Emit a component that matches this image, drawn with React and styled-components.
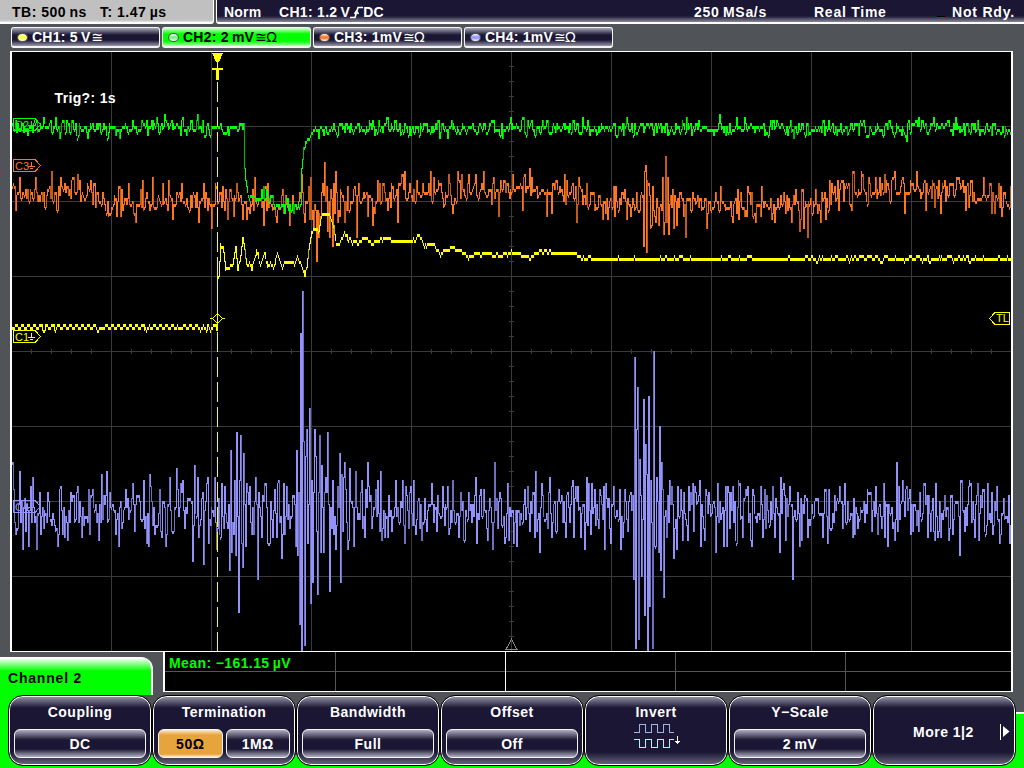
import React from 'react'
import styled, { createGlobalStyle } from 'styled-components';

const GREEN = '#00ff00';
const YELLOW = '#ffff00';
const ORANGE = '#ff7620';
const VIOLET = '#9292fa';
const NAVY = '#1a1633';

const LEFT = 12;
const RIGHT = 1011;

// small seeded generator, keeps the noise the same on every render
const rng = (seed) => () => {
    seed = (seed * 1664525 + 1013904223) % 4294967296;
    return seed / 4294967296;
};

const lerp = (knots, x) => {
    for (let i = 1; i < knots.length; i++) {
        if (x <= knots[i][0]) {
            const [x0, y0] = knots[i - 1];
            const [x1, y1] = knots[i];
            return y0 + ((y1 - y0) * (x - x0)) / (x1 - x0);
        }
    }
    return knots[knots.length - 1][1];
};

const pairs = (text) => text.trim().split(/\s+/).map((p) => p.split(':').map(Number));

// one level per pixel column, snapped to the 3px steps of the converter
const buildTrace = ({ knots, amp, hold, seed, spikes, ripple }) => {
    const rand = rng(seed);
    const fixed = new Map(spikes);
    const levels = [];
    let offset = 0;
    for (let x = LEFT; x < RIGHT; x++) {
        if (rand() > hold) offset = (rand() + rand() + rand() - 1.5) * 1.25 * amp(x);
        const wave = ripple ? ripple(x) : 0;
        const y = fixed.has(x + 1) ? fixed.get(x + 1) : lerp(knots, x) + offset + wave;
        levels.push(Math.round((y - 52) / 3) * 3 + 51);
    }
    let bright = '';
    let dim = '';
    levels.forEach((y, i) => {
        const prev = i ? levels[i - 1] : y;
        const jump = Math.abs(y - prev);
        const top = jump > 3 ? Math.min(y, prev) : y;
        const bottom = jump > 3 ? Math.max(y, prev) + 1 : y + 3;
        const column = `M${LEFT + i + 0.5} ${top}V${Math.min(651, bottom)}`;
        if (jump > 8 && rand() > 0.65) dim += column;
        else bright += column;
    });
    return { bright, dim };
};

const ch1 = buildTrace({
    seed: 5, hold: 0.5, spikes: [],
    amp: (x) => (x < 217 ? 0.7 : x < 335 ? 0.4 : x < 590 ? 1.6 : x < 790 ? 1 : 0.8),
    ripple: (x) => {
        if (x < 217) return x % 6 < 3 ? 1.6 : -1.6;
        if (x > 800) return x % 8 < 3 ? 2 : -0.6;
        return 0;
    },
    knots: pairs(`12:327.5 216:327.5 217:277 218:277 220:245 222:247 225:270 228:267 232:266 235:247 237:270
        240:256 242:238 244:250 246:266 249:262 251:270 256:250 260:264 264:253 267:267 270:262 273:268
        277:253 282:267 285:261 292:261 294:264 297:257 300:263 302:268 304:276 306:268 308:250 311:232
        315:228 318:231 321:217 323:213 330:216 333:227 335:242 340:243 344:231 347:239 358:243 364:236
        370:243 380:240 387:237 394:242 400:240 415:240 417:234 420:238 424:246 432:243 440:254 448:249
        460:249 468:257 476:253 500:255 511:252 518:254 530:257 540:252 552:252 560:254 568:252 576:254
        584:258 1011:258.2`),
});

const ch2 = buildTrace({
    seed: 21, hold: 0.2,
    amp: (x) => (x > 243 && x < 254 ? 0 : x > 299 && x < 313 ? 1 : 6.6),
    knots: pairs(`12:129 60:128 100:129 160:126 243:129 244:170 245:182 247:192 249:198 252:196 258:198 264:196
        270:203 280:205 290:208 299:207 300:205 301:168 302:160 303:150 305:145 307:140 309:138 311:134
        314:131 330:129 420:128 1011:128`),
    spikes: pairs(`60:138 78:138 116:137 120:138 157:119 158:124 181:136 264:188 294:214 654:135 668:135
        687:118 720:115 726:135 737:119 848:135 895:135 907:141 956:118 992:135`),
});

const ch3 = buildTrace({
    seed: 77, hold: 0.25, amp: (x) => (x > 300 && x < 335 ? 20 : x > 643 && x < 670 ? 26 : 11.5),
    knots: pairs('12:191 90:193 105:200 210:201 300:203 380:203 400:190 560:190 600:203 800:206 830:198 860:190 900:189 950:192 1011:201'),
    spikes: pairs(`16:210 20:178 36:178 38:203 43:203 52:172 61:178 78:175 91:181 107:214 109:216 117:217 123:210
        129:184 136:223 143:181 153:178 163:184 182:184 189:207 199:222 204:184 212:229 216:184 222:207
        228:219 237:184 247:220 255:178 264:226 268:184 277:223 283:190 290:225 309:187 312:220 314:230
        317:262 319:238 325:163 328:232 330:238 333:246 336:172 338:224 341:190 345:222 348:187 355:187
        357:238 365:200 373:226 378:181 388:211 392:184 398:222 403:175 405:172 413:201 434:178 445:204
        449:175 453:213 462:175 469:175 476:175 484:172 499:216 513:175 523:210 530:169 547:216 552:213
        556:180 577:222 581:187 603:219 608:219 614:187 631:216 637:193 644:247 646:166 647:253 649:184
        651:229 653:187 655:218 659:225 663:178 664:235 666:157 667:224 668:178 669:235 674:228 677:225
        686:238 693:193 707:229 716:193 721:187 733:223 738:190 756:223 762:187 775:223 784:193 792:223
        796:190 800:232 804:228 808:238 816:190 821:223 826:219 835:187 839:211 845:184 849:184 852:211
        862:172 868:204 876:178 880:178 890:202 895:172 905:214 917:172 926:211 933:181 939:181 941:214
        966:211 971:181 984:178 995:214 999:184 1002:217 1010:207`),
});

const ch4 = buildTrace({
    seed: 1234, hold: 0.12,
    amp: (x) => ((x > 228 && x < 250) || (x > 300 && x < 350) || (x > 633 && x < 664) ? 36 : 22),
    knots: pairs('12:511 1011:512'),
    spikes: pairs(`12:481 13:463 16:535 20:472 23:550 29:547 33:478 37:550 41:535 44:528 48:493 52:526 56:531
        59:535 60:490 63:536 68:541 71:493 76:520 82:538 88:523 89:490 93:490 99:541 107:472 116:535
        119:547 126:490 144:481 147:544 149:547 150:475 155:535 166:547 170:478 177:468 183:480 185:529
        193:562 195:466 198:478 199:538 204:565 207:484 208:478 209:544 217:550 221:538 225:487 230:571
        231:451 232:553 236:556 237:433 239:612 241:436 243:567 244:454 246:547 247:484 254:535 256:478
        258:580 262:537 265:484 273:537 278:484 282:558 284:484 287:487 296:546 297:451 298:556 300:625
        301:334 302:651 303:292 304:442 305:646 307:430 308:544 310:409 311:604 312:481 313:583 315:430
        316:457 318:595 320:436 321:553 322:466 324:553 326:478 328:433 330:592 333:481 334:534 336:550
        340:454 341:583 345:463 348:549 350:469 354:547 356:472 360:519 362:481 365:537 368:463 372:528
        376:490 381:472 382:541 385:537 388:537 392:532 396:481 403:481 405:544 409:528 414:481 416:535
        422:540 427:532 432:484 443:487 459:538 477:544 484:490 488:540 493:550 495:463 505:543 508:484
        509:541 517:547 525:490 535:538 536:472 540:553 550:478 552:538 559:490 572:487 585:550 587:478
        591:535 595:490 599:529 605:550 606:484 611:544 614:487 620:490 621:550 625:490 628:532 631:493
        634:580 635:358 636:649 637:430 638:388 639:640 640:460 642:577 644:400 645:616 646:445 648:651
        649:397 650:607 651:481 653:649 654:352 655:547 656:547 657:478 659:553 660:427 661:571 662:463
        663:490 664:598 667:538 670:481 672:487 674:559 677:550 681:490 683:541 684:493 689:487 694:532
        695:487 700:481 701:547 705:541 706:490 709:493 716:553 724:547 728:487 731:493 736:541 740:484
        743:538 748:487 751:541 753:490 761:487 763:538 773:487 775:538 780:553 781:478 784:484 786:541
        793:580 800:547 802:541 823:538 840:487 845:484 855:535 868:490 876:487 884:484 885:538 888:547
        897:463 903:481 906:490 911:535 928:538 936:484 941:538 949:541 960:556 961:481 970:481 975:538
        978:484 988:484 993:535 1000:544 1010:544`),
});

const channels = [
    { name: 'CH1:', value: '5\u2009V', ohm: false, color: '#ffff40' },
    { name: 'CH2:', value: '2\u2009mV', ohm: true, color: '#7df08a', active: true },
    { name: 'CH3:', value: '1mV', ohm: true, color: '#ff7a28' },
    { name: 'CH4:', value: '1mV', ohm: true, color: '#9a9aff' },
];

const range = (from, to, step) => {
    const out = [];
    for (let v = from; v <= to; v += step) out.push(v);
    return out;
};

const Trace = ({ data, color, dim }) => (
    <g fill="none">
        <path d={data.bright} stroke={color} />
        <path d={data.dim} stroke={dim} />
    </g>
);

const Tag = ({ y, color, label }) => (
    <g stroke={color} fill="none">
        <path d={`M13.5 ${y - 6}H35L40.5 ${y}L35 ${y + 6}H13.5Z`} />
        <path d={`M31.5 ${y - 4}v5M28 ${y + 1}h7M30 ${y + 3}h3`} />
        <TagText x="15" y={y + 4} fill={color} stroke="none">{label}</TagText>
    </g>
);

const Graph = () => (
    <Plot viewBox="12 52 999 599" shapeRendering="crispEdges">
        <g stroke="#3a3a3a" fill="none">
            {range(111, 911, 100).map((x) => <path key={x} d={`M${x + 0.5} 52V651`} />)}
            {range(126, 576, 75).map((y) => <path key={y} d={`M12 ${y + 0.5}H1011`} />)}
            {range(31, 1000, 20).map((x) => <path key={x} d={`M${x + 0.5} 349V354`} />)}
            {range(66, 645, 15).map((y) => <path key={y} d={`M509 ${y + 0.5}H514`} />)}
        </g>
        <path d="M511.5 639L517 649.5H506Z" fill="none" stroke="#8a8a8a" />
        <Trace data={ch4} color={VIOLET} dim="#6f6fc0" />
        <Trace data={ch3} color={ORANGE} dim="#c25a1c" />
        <Trace data={ch2} color={GREEN} dim="#00b400" />
        <path d="M217.5 82V651" stroke={YELLOW} strokeDasharray="20 5" />
        <path d="M217.5 270V330" stroke={YELLOW} />
        <Trace data={ch1} color={YELLOW} dim="#b4b400" />
        <Tag y={124.5} color={GREEN} label="C2" />
        <Tag y={165.5} color={ORANGE} label="C3" />
        <Tag y={336.5} color={YELLOW} label="C1" />
        <Tag y={506.5} color={VIOLET} label="C4" />
        <path d="M212 53H223L219 62H216Z" fill={YELLOW} />
        <path d="M212 69H223" stroke={YELLOW} strokeWidth="2" />
        <path d="M217.5 62V68" stroke={YELLOW} />
        <path d="M217.5 68V80" stroke={YELLOW} strokeWidth="3" />
        <path d="M217.5 313.5L222.5 318.5L217.5 323.5L212.5 318.5Z" fill="none" stroke={YELLOW} />
        <path d="M210 318.5H213M222 318.5H225" stroke={YELLOW} />
        <path d="M1009.5 312.5H995L989.5 318.5L995 324.5H1009.5Z" fill="none" stroke={YELLOW} />
        <TagText x="996" y="322" fill={YELLOW}>TL</TagText>
        <TrigText x="54.5" y="103">Trig?: 1s</TrigText>
    </Plot>
);

const App = () => {
    return (
        <Screen>
            <GlobalStyle />
            <TopBar>
                <TimeBase>
                    <Readout $w="88px">TB: 500{'\u2009'}ns</Readout>
                    <Readout>T: 1.47{'\u2009'}µs</Readout>
                </TimeBase>
                <Trigger>
                    <Readout $w="55px" $ls="0.2px">Norm</Readout>
                    <Readout $w="415px" $ls="0.3px">
                        CH1: 1.2{'\u2009'}V
                        <svg width="13" height="13" viewBox="0 0 13 13" fill="none" stroke="#fff" strokeWidth="1.6">
                            <path d="M0 11.5H5L8 1.5H13M4.5 8L6.5 5L8.5 8" />
                        </svg>
                        DC
                    </Readout>
                    <Readout $w="120px" $ls="0.7px">250{'\u2009'}MSa/s</Readout>
                    <Readout $w="123px" $ls="0.75px">Real Time</Readout>
                    <Led />
                    <Readout $ls="0.8px">Not Rdy.</Readout>
                </Trigger>
            </TopBar>
            <Tabs>
                {channels.map((c) => (
                    <Tab key={c.name} $active={c.active}>
                        <Dot $color={c.color} />
                        <span>{c.name} {c.value}</span>
                        <Symbol>≅{c.ohm && 'Ω'}</Symbol>
                    </Tab>
                ))}
            </Tabs>
            <Scope>
                <Graph />
            </Scope>
            <Middle>
                <ChannelName>Channel 2</ChannelName>
                <Measure>
                    <Cell $span>Mean: −161.15{'\u2009'}µV</Cell>
                    <Cell $line="#fff" />
                    <Cell $line="#555" />
                    <Cell $line="#555" />
                    <Cell />
                </Measure>
            </Middle>
            <SoftKeys>
                <Key>
                    <Title>Coupling</Title>
                    <Row><Field>DC</Field></Row>
                </Key>
                <Key>
                    <Title>Termination</Title>
                    <Row>
                        <Field $on>50Ω</Field>
                        <Field>1MΩ</Field>
                    </Row>
                </Key>
                <Key>
                    <Title>Bandwidth</Title>
                    <Row><Field>Full</Field></Row>
                </Key>
                <Key>
                    <Title>Offset</Title>
                    <Row><Field>Off</Field></Row>
                </Key>
                <Key>
                    <Title>Invert</Title>
                    <InvertIcon width="48" height="26" viewBox="0 0 48 26" fill="none" shapeRendering="crispEdges">
                        <path d="M0 9.5H5.5V1.5H11.5V9.5H17.5V1.5H23.5V9.5H29.5V1.5H35.5V9.5H40" stroke="#9fb4e6" />
                        <path d="M0 16.5H5.5V24.5H11.5V16.5H17.5V24.5H23.5V16.5H29.5V24.5H35.5V16.5H40" stroke="#b4f0fa" />
                        <path d="M43.5 13V21M41 18.5H46M42 19.5H45" stroke="#fff" />
                    </InvertIcon>
                </Key>
                <Key>
                    <Title>Y−Scale</Title>
                    <Row><Field>2{'\u2009'}mV</Field></Row>
                </Key>
                <Key $more>
                    <span>More 1|2</span>
                    <svg width="10" height="16" viewBox="0 0 10 16">
                        <path d="M0.5 0V16" stroke="#fff" />
                        <path d="M3 2L9.5 7.5L3 13Z" fill="#fff" />
                    </svg>
                </Key>
            </SoftKeys>
        </Screen>
    )
}

const GlobalStyle = createGlobalStyle`
  body{
    margin: 0;
    background: #505458;
  }
`;

const Screen = styled.main`
  width: 1024px;
  height: 768px;
  display: flex;
  flex-direction: column;
  overflow: hidden;
  background: #505458;
  color: #fff;
  font-family: "Liberation Sans", Arial, sans-serif;
  font-size: 14px;
  font-weight: 700;
  letter-spacing: 0.5px;
  line-height: 16px;
  white-space: nowrap;
`;

const TopBar = styled.header`
  display: flex;
  gap: 2px;
  height: 24px;
`;

const TimeBase = styled.div`
  box-sizing: border-box;
  width: 214px;
  display: flex;
  align-items: center;
  padding-left: 12px;
  background: linear-gradient(#c0c0c0 20px, #e6e6e6 22px);
  border-right: 1px solid #fff;
  border-bottom: 2px solid #fff;
  border-bottom-right-radius: 3px;
  color: #000;
`;

const Trigger = styled.div`
  box-sizing: border-box;
  flex: 1;
  display: flex;
  align-items: center;
  padding-left: 7px;
  background: linear-gradient(${NAVY} 16px, #8a889c 22px);
  border-left: 1px solid #fff;
  border-bottom: 2px solid #fff;
  border-bottom-left-radius: 3px;
`;

const Readout = styled.span`
  display: flex;
  flex-shrink: 0;
  align-items: center;
  width: ${(p) => p.$w || 'auto'};
  letter-spacing: ${(p) => p.$ls || '0.5px'};
  padding-top: 2px;
`;

const Led = styled.i`
  flex-shrink: 0;
  width: 8px;
  height: 2px;
  margin: 12px 7px 0 0;
  background: linear-gradient(#000 1px, #e00000 1px);
`;

const Tabs = styled.nav`
  display: flex;
  gap: 2px;
  padding: 3px 0 0 11px;
  height: 21px;
`;

const Tab = styled.div`
  box-sizing: border-box;
  width: 149px;
  display: flex;
  align-items: center;
  padding-left: 5px;
  border: 1px solid #f4f4f4;
  border-bottom-width: 2px;
  border-radius: 3px;
  letter-spacing: 0.25px;
  color: ${(p) => (p.$active ? '#000' : '#fff')};
  background: ${(p) => (p.$active
        ? `linear-gradient(#d8ffd8, ${GREEN} 6px, ${GREEN} 13px, #b0ffb0)`
        : `linear-gradient(#a8a6b8, ${NAVY} 7px, ${NAVY} 12px, #9a98ac)`)};
`;

const Dot = styled.i`
  box-sizing: border-box;
  width: 11px;
  height: 9px;
  margin-right: 4px;
  border: 1px solid #555;
  border-radius: 50%;
  background: linear-gradient(#fff, ${(p) => p.$color} 40%, ${(p) => p.$color} 60%, #fff);
`;

const Symbol = styled.span`
  margin-left: 1px;
  font-family: "DejaVu Sans", sans-serif;
  font-size: 14px;
  font-weight: 400;
  letter-spacing: -0.8px;
`;

const Scope = styled.section`
  box-sizing: border-box;
  width: 1003px;
  height: 601px;
  margin: 3px 0 0 10px;
  border: 1px solid #fff;
  border-left-width: 2px;
  border-right-width: 2px;
  background: #000;
`;

const Plot = styled.svg`
  display: block;
  width: 999px;
  height: 599px;
`;

const TagText = styled.text`
  font-size: 11px;
  font-weight: 400;
  letter-spacing: 0;
`;

const TrigText = styled.text`
  fill: #fff;
  font-size: 14px;
  letter-spacing: 0.35px;
`;

const Middle = styled.div`
  display: flex;
  align-items: flex-start;
  justify-content: space-between;
  height: 43px;
  padding-right: 11px;
`;

const ChannelName = styled.div`
  box-sizing: border-box;
  width: 153px;
  height: 38px;
  margin-top: 5px;
  padding: 13px 0 0 8px;
  border-right: 2px solid #fff;
  border-top-right-radius: 12px;
  background: linear-gradient(#fff 1px, ${GREEN} 14px);
  color: #000;
  letter-spacing: 0.8px;
`;

const Measure = styled.div`
  box-sizing: border-box;
  display: grid;
  grid-template-columns: 171px 170px 170px 170px 1fr;
  width: 850px;
  height: 40px;
  border: 2px solid #fff;
  border-top: 0;
  border-bottom-width: 1px;
  background: linear-gradient(#000 19px, #555 19px, #555 20px, #000 20px);
  color: ${GREEN};
  letter-spacing: 0.4px;
`;

const Cell = styled.div`
  padding: 3px 0 0 4px;
  border-right: 1px solid ${(p) => p.$line || (p.$span ? '#555' : 'transparent')};
`;

// grey behind the upper part of the keys, channel colour on the left, right and below
const SoftKeys = styled.footer`
  display: flex;
  height: 73px;
  padding-left: 8px;
  background:
    linear-gradient(${GREEN}, ${GREEN}) 0 0 / 130px 73px no-repeat,
    linear-gradient(#fff, #fff) 1015px 17px / 9px 2px no-repeat,
    linear-gradient(${GREEN}, ${GREEN}) 1015px 19px / 9px 54px no-repeat,
    linear-gradient(transparent 60px, ${GREEN} 60px);
`;

const Key = styled.div`
  box-sizing: border-box;
  width: 144px;
  height: 71px;
  display: flex;
  flex-direction: ${(p) => (p.$more ? 'row' : 'column')};
  align-items: center;
  justify-content: ${(p) => (p.$more ? 'space-between' : 'flex-start')};
  padding: ${(p) => (p.$more ? '2px 5px 0 40px' : '8px 5px 0')};
  border: 1px solid #000;
  border-radius: 15px;
  box-shadow: inset 0 0 0 1px #fff;
  background: linear-gradient(#9a98ac, ${NAVY} 12px, ${NAVY} 56px, #6a6880);
`;

const Title = styled.div`
  height: 25px;
`;

const Row = styled.div`
  align-self: stretch;
  display: flex;
  gap: 3px;
`;

const Field = styled.div`
  box-sizing: border-box;
  flex: 1;
  height: 29px;
  padding-top: 6px;
  border: 1px solid #f4f4f4;
  border-radius: 6px;
  text-align: center;
  color: ${(p) => (p.$on ? '#000' : '#fff')};
  background: ${(p) => (p.$on
        ? 'linear-gradient(#fbe9cc, #e8a43c 5px, #e8a43c 24px, #fbe9cc)'
        : `linear-gradient(#b0aec0, ${NAVY} 10px, ${NAVY} 19px, #b0aec0)`)};
`;

const InvertIcon = styled.svg`
  margin: -6px -4px 0 0;
`;

export default App
